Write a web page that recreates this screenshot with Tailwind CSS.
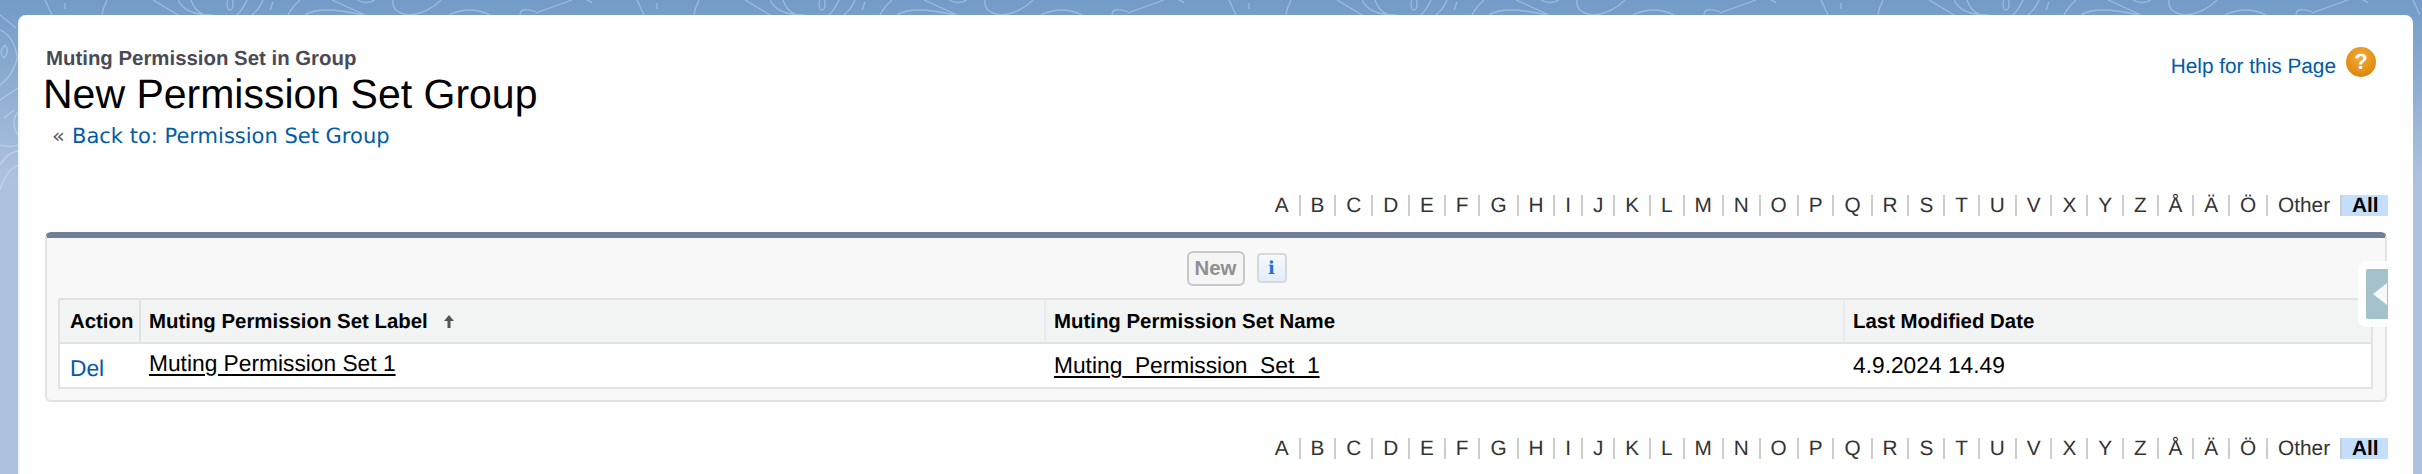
<!DOCTYPE html>
<html lang="en">
<head>
<meta charset="utf-8">
<title>New Permission Set Group</title>
<script src="https://cdn.jsdelivr.net/npm/@tailwindcss/browser@4"></script>
</head>
<body>
<div class="relative w-[2422px] h-[474px] overflow-hidden bg-[linear-gradient(#729bc7_0px,#aec2df_180px)] font-['Liberation_Sans',sans-serif] [text-rendering:geometricPrecision] text-[20.8px] text-black">
  <svg class="absolute left-0 top-0" width="2422" height="474" fill="none" stroke="#ffffff" stroke-opacity="0.3" stroke-width="1.3" aria-hidden="true">
    <defs>
      <pattern id="swirl" patternUnits="userSpaceOnUse" width="592" height="474">
        <path d="M45 0L52 15M65 3V9M107 0Q103 8 102 15M153 0L178 15M178 0Q185 15 212 15M191 0Q195 12 205 15M247 0Q243 9 237 15M263 0Q260 8 252 15M273 2L270 10M300 0Q292 7 288 15M305 15Q320 5 362 15M332 0L365 15M357 0Q366 5 375 0M393 0Q391 13 410 15Q428 13 441 0M449 15Q470 5 490 15M520 15Q520 6 536 12M536 13L572 0M587 0L617 15"/>
        <ellipse cx="230" cy="4" rx="3" ry="6"/>
      </pattern>
    </defs>
    <rect width="2422" height="15" fill="url(#swirl)" stroke="none"/>
    <path d="M0 15L16 28M0 30Q14 35 18 60M5 45Q10 52 4 58Q-2 52 5 45M0 85Q14 75 18 55M0 100L18 88M14 110L4 118M18 112Q10 122 18 135M0 145Q10 148 18 145M0 165Q8 152 18 151M0 190Q6 170 18 165"/>
  </svg>

  <main class="relative ml-[18px] mt-[15px] w-[2395px] h-[459px] rounded-t-lg bg-white border-l-2 border-[#f3f5f8] pl-[25px] pr-[25px]">
    <header class="flex justify-between items-start pt-[32px]">
      <div>
        <h2 class="ml-[1px] text-[20.4px] leading-[24px] font-bold text-[#4a4a56]">Muting Permission Set in Group</h2>
        <h1 class="text-[41px] leading-[46px] -ml-[2px] font-normal text-black">New Permission Set Group</h1>
        <div class="mt-[8px] flex items-center h-[24px] pl-[7px] font-['DejaVu_Sans',sans-serif] text-[21px]">
          <span class="text-[#555] w-[20px]">«</span>
          <a class="text-[#015ba7]">Back to: Permission Set Group</a>
        </div>
      </div>
      <div class="flex items-center gap-[10px] mr-[12px] mt-[-5px]">
        <a class="text-[#015ba7] mt-[9px]">Help for this Page</a>
        <span class="flex items-center justify-center w-[30px] h-[30px] rounded-full bg-[radial-gradient(circle_at_50%_35%,#f3aa3c,#e28a10_70%,#c9780f)] text-white font-bold text-[22px] leading-none">?</span>
      </div>
    </header>

    <nav class="mt-[46px] flex justify-end h-[21px] leading-[21px] text-[#333]">
      <a class="px-[9.95px] border-r-2 border-[#ccc]">A</a><a class="px-[9.95px] border-r-2 border-[#ccc]">B</a><a class="px-[9.95px] border-r-2 border-[#ccc]">C</a><a class="px-[9.95px] border-r-2 border-[#ccc]">D</a><a class="px-[9.95px] border-r-2 border-[#ccc]">E</a><a class="px-[9.95px] border-r-2 border-[#ccc]">F</a><a class="px-[9.95px] border-r-2 border-[#ccc]">G</a><a class="px-[9.95px] border-r-2 border-[#ccc]">H</a><a class="px-[9.95px] border-r-2 border-[#ccc]">I</a><a class="px-[9.95px] border-r-2 border-[#ccc]">J</a><a class="px-[9.95px] border-r-2 border-[#ccc]">K</a><a class="px-[9.95px] border-r-2 border-[#ccc]">L</a><a class="px-[9.95px] border-r-2 border-[#ccc]">M</a><a class="px-[9.95px] border-r-2 border-[#ccc]">N</a><a class="px-[9.95px] border-r-2 border-[#ccc]">O</a><a class="px-[9.95px] border-r-2 border-[#ccc]">P</a><a class="px-[9.95px] border-r-2 border-[#ccc]">Q</a><a class="px-[9.95px] border-r-2 border-[#ccc]">R</a><a class="px-[9.95px] border-r-2 border-[#ccc]">S</a><a class="px-[9.95px] border-r-2 border-[#ccc]">T</a><a class="px-[9.95px] border-r-2 border-[#ccc]">U</a><a class="px-[9.95px] border-r-2 border-[#ccc]">V</a><a class="px-[9.95px] border-r-2 border-[#ccc]">X</a><a class="px-[9.95px] border-r-2 border-[#ccc]">Y</a><a class="px-[9.95px] border-r-2 border-[#ccc]">Z</a><a class="px-[9.95px] border-r-2 border-[#ccc]">Å</a><a class="px-[9.95px] border-r-2 border-[#ccc]">Ä</a><a class="px-[9.95px] border-r-2 border-[#ccc]">Ö</a><a class="px-[9.95px] border-r-2 border-[#ccc]">Other</a><a class="pl-[10px] w-[46px] bg-[#c3dffc] font-bold text-black">All</a>
    </nav>

    <section class="relative mt-[16px] mr-[1px] h-[170px] rounded-md border-2 border-t-[6px] border-[#e0e3e5] border-t-[#747e96] bg-[#f8f8f8] pl-[11px] pr-[12px]">
      <div class="h-[60px] flex items-center justify-center gap-[12px] pl-[42px]">
        <button class="w-[58px] h-[35px] rounded-md border-2 border-[#c8c8c8] bg-[#f5f5f5] text-[20.4px] font-bold text-[#909090]">New</button>
        <span class="flex items-center justify-center w-[30px] h-[30px] rounded-[4px] border-2 border-[#d8d8d8] bg-[linear-gradient(#f6f9fd,#e3edf9)] font-['DejaVu_Serif',serif] font-bold text-[18px] text-[#1a76d2]">i</span>
      </div>
      <div class="border-2 border-[#e0e3e5] bg-white">
        <div class="grid grid-cols-[81px_905px_799px_1fr] h-[44px] bg-[#f2f3f3] border-b-2 border-[#e0e3e5] text-[20.4px] font-bold leading-[24px]">
          <div class="border-r-2 border-[#e0e3e5] pl-[10px] pt-[10px] whitespace-nowrap">Action</div>
          <div class="border-r-2 border-[#e8eaec] pl-[8px] pt-[10px] flex items-start gap-[15px]">
            <span>Muting Permission Set Label</span>
            <svg class="mt-[4px]" width="12" height="15" viewBox="0 0 12 15" fill="#555" aria-hidden="true"><path d="M6 1L11 7H7.5V14H4.5V7H1Z"/></svg>
          </div>
          <div class="border-r-2 border-[#e8eaec] pl-[8px] pt-[10px]">Muting Permission Set Name</div>
          <div class="pl-[8px] pt-[10px]">Last Modified Date</div>
        </div>
        <div class="grid grid-cols-[81px_905px_799px_1fr] h-[43px] text-[22.75px] leading-[24px]">
          <div class="pl-[10px] pt-[12px]"><a class="text-[#015ba7]">Del</a></div>
          <div class="pl-[8px] pt-[7px]"><a class="underline underline-offset-[3px]">Muting Permission Set 1</a></div>
          <div class="pl-[8px] pt-[9px]"><a class="underline underline-offset-[3px]">Muting_Permission_Set_1</a></div>
          <div class="pl-[8px] pt-[9px]">4.9.2024 14.49</div>
        </div>
      </div>
      <div class="absolute right-[-3px] top-[23px] w-[30px] h-[66px] rounded-l-[8px] bg-white/90 pl-[8px] py-[8px]">
        <div class="h-[50px] rounded-l-[2px] bg-[#a3c2cc] flex items-center justify-end">
          <svg width="16" height="24" viewBox="0 0 16 24" aria-hidden="true"><path d="M1 12L15 1V23Z" fill="#ffffff" fill-opacity="0.9"/></svg>
        </div>
      </div>
    </section>

    <nav class="mt-[36px] flex justify-end h-[21px] leading-[21px] text-[#333]">
      <a class="px-[9.95px] border-r-2 border-[#ccc]">A</a><a class="px-[9.95px] border-r-2 border-[#ccc]">B</a><a class="px-[9.95px] border-r-2 border-[#ccc]">C</a><a class="px-[9.95px] border-r-2 border-[#ccc]">D</a><a class="px-[9.95px] border-r-2 border-[#ccc]">E</a><a class="px-[9.95px] border-r-2 border-[#ccc]">F</a><a class="px-[9.95px] border-r-2 border-[#ccc]">G</a><a class="px-[9.95px] border-r-2 border-[#ccc]">H</a><a class="px-[9.95px] border-r-2 border-[#ccc]">I</a><a class="px-[9.95px] border-r-2 border-[#ccc]">J</a><a class="px-[9.95px] border-r-2 border-[#ccc]">K</a><a class="px-[9.95px] border-r-2 border-[#ccc]">L</a><a class="px-[9.95px] border-r-2 border-[#ccc]">M</a><a class="px-[9.95px] border-r-2 border-[#ccc]">N</a><a class="px-[9.95px] border-r-2 border-[#ccc]">O</a><a class="px-[9.95px] border-r-2 border-[#ccc]">P</a><a class="px-[9.95px] border-r-2 border-[#ccc]">Q</a><a class="px-[9.95px] border-r-2 border-[#ccc]">R</a><a class="px-[9.95px] border-r-2 border-[#ccc]">S</a><a class="px-[9.95px] border-r-2 border-[#ccc]">T</a><a class="px-[9.95px] border-r-2 border-[#ccc]">U</a><a class="px-[9.95px] border-r-2 border-[#ccc]">V</a><a class="px-[9.95px] border-r-2 border-[#ccc]">X</a><a class="px-[9.95px] border-r-2 border-[#ccc]">Y</a><a class="px-[9.95px] border-r-2 border-[#ccc]">Z</a><a class="px-[9.95px] border-r-2 border-[#ccc]">Å</a><a class="px-[9.95px] border-r-2 border-[#ccc]">Ä</a><a class="px-[9.95px] border-r-2 border-[#ccc]">Ö</a><a class="px-[9.95px] border-r-2 border-[#ccc]">Other</a><a class="pl-[10px] w-[46px] bg-[#c3dffc] font-bold text-black">All</a>
    </nav>
  </main>
</div>
</body>
</html>
